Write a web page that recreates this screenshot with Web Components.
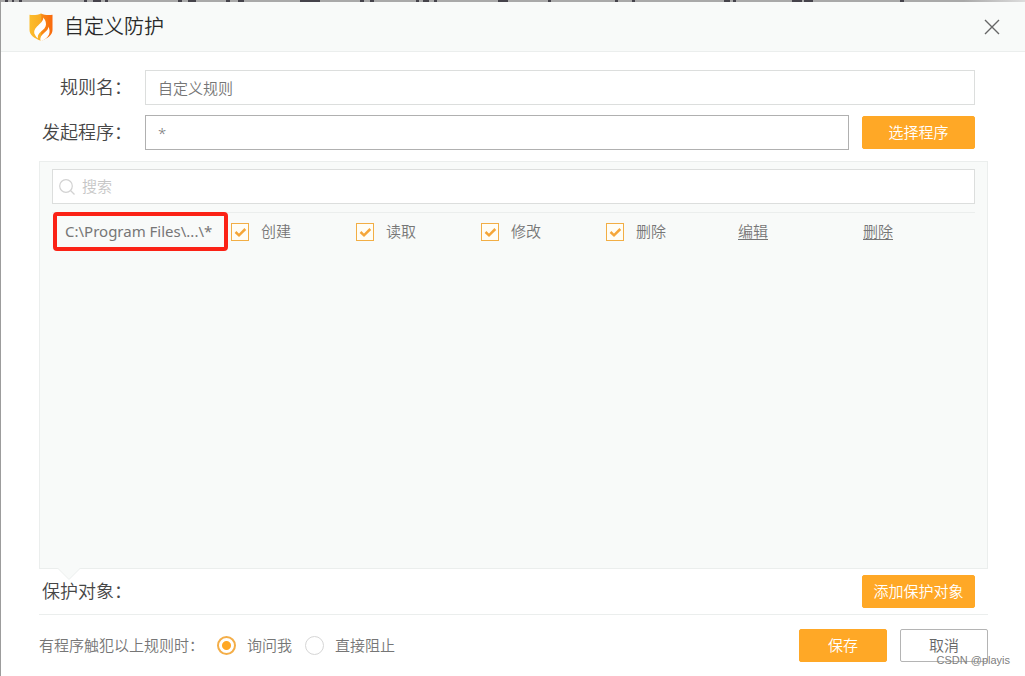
<!DOCTYPE html>
<html lang="zh-CN">
<head>
<meta charset="utf-8">
<title>自定义防护</title>
<style>
  html { height: 100%; }
  body {
    margin: 0;
    min-height: 100%;
    display: flex;
    --ui-font: "Liberation Sans", "Noto Sans CJK SC", sans-serif;
    --accent: #ffa826;
    --soft: #f8faf9;
    --line: #ebeeed;
    --ink: #464646;
    --text: #767676;
    font: 350 15px/20px var(--ui-font);
    color: var(--text);
  }
</style>
</head>
<body>
<rule-dialog heading="自定义防护">
  <text-field label="规则名：" value="自定义规则"></text-field>
  <text-field label="发起程序：" value="*" strong>
    <action-button slot="action">选择程序</action-button>
  </text-field>
  <target-panel slot="panel"></target-panel>
  <section-bar slot="footer" label="保护对象：">
    <action-button>添加保护对象</action-button>
  </section-bar>
  <response-bar slot="footer" label="有程序触犯以上规则时：">
    <action-button size="small">保存</action-button>
    <action-button size="small" variant="plain">取消</action-button>
  </response-bar>
  <span slot="credit">CSDN @playis</span>
</rule-dialog>

<script>
const define = (name, html, setup) => {
  const template = document.createElement('template');
  template.innerHTML = html;
  customElements.define(name, class extends HTMLElement {
    constructor() {
      super();
      this.attachShadow({ mode: 'open' }).append(template.content.cloneNode(true));
    }
    connectedCallback() {
      if (setup) setup(this, this.shadowRoot);
    }
  });
};

define('brand-shield', `
<style>
  :host { display: block; width: 24px; height: 28px; }
  svg { display: block; width: 100%; height: 100%; }
</style>
<svg viewBox="0 0 24 28" aria-hidden="true">
  <defs>
    <linearGradient id="g" x1="0" y1="0" x2="1" y2="0">
      <stop offset="0" stop-color="#fcbd2c"/><stop offset=".5" stop-color="#f9ac24"/>
      <stop offset=".53" stop-color="#f98a16"/><stop offset="1" stop-color="#f9690d"/>
    </linearGradient>
  </defs>
  <path fill="url(#g)" d="M12 .5C9 2 4.5 2.2.5 1.8V17c0 5 5 8.500 11.500 10.800C18.500 25.500 23.500 22 23.500 17V1.800C19.500 2.200 15 2 12 .5z"/>
  <path fill="#fff" d="M14.300 4.500C14.500 8 11 10.500 8 13.500C5 16.500 4.300 19.500 6.200 22.300C7 23.800 8 24.800 9 25.400C8.200 21.500 11 19.500 13.500 17.300C16.500 15 17.500 12 16.800 9.500C16.500 7.500 15.500 6 14.300 4.500z"/>
  <path fill="#fff" d="M19.300 13.500C19.500 16.500 17 18.300 14.800 20.300C12.500 22.300 11 24 11.300 27.500L12.500 28C16 26.500 18.800 24.300 20 21.500C21 18.800 20.700 16 19.300 13.500z"/>
</svg>`);

define('action-button', `
<style>
  :host { display: block; flex: none; }
  button {
    box-sizing: border-box; display: block; width: 113px; height: 33px; padding: 0;
    border: 1px solid var(--accent); border-radius: 2px; background: var(--accent);
    color: #fff; font: 350 15px/20px var(--ui-font);
  }
  :host([size="small"]) button { width: 88px; }
  :host([variant="plain"]) button { background: #fff; border-color: #b4b4b4; color: #666; }
</style>
<button type="button"><slot></slot></button>`);

define('text-field', `
<style>
  :host { display: flex; align-items: center; }
  label {
    flex: none; width: 93px; margin-right: 13px; text-align: right; white-space: nowrap;
    font-size: 18px; color: var(--ink);
  }
  input {
    box-sizing: border-box; flex: 1; min-width: 0; height: 35px; padding: 0 12px;
    border: 1px solid #dcdedd; border-radius: 0; background: #fff; outline: 0;
    color: var(--text); font: 350 15px/20px "Noto Sans", "Noto Sans CJK SC", sans-serif;
  }
  :host([strong]) input { border-color: #b0b0b0; }
  ::slotted(*) { margin-left: 13px; }
</style>
<label for="field"></label><input id="field" type="text"><slot name="action"></slot>`,
(host, root) => {
  root.querySelector('label').textContent = host.getAttribute('label');
  root.querySelector('input').value = host.getAttribute('value');
});

define('search-box', `
<style>
  :host {
    box-sizing: border-box; display: flex; align-items: center; gap: 7px; height: 35px;
    padding: 0 6px; border: 1px solid #dcdedd; background: #fff;
  }
  svg { flex: none; width: 16px; height: 16px; fill: none; stroke: #d2d2d2; stroke-width: 1.2; }
  input {
    flex: 1; min-width: 0; padding: 0; border: 0; outline: 0; background: none;
    color: var(--text); font: 350 15px/20px var(--ui-font);
  }
  input::placeholder { color: #c6c6c6; opacity: 1; }
</style>
<svg viewBox="0 0 16 16" aria-hidden="true"><circle cx="7" cy="7" r="6.300"/><path d="M11.500 11.500L15.500 15.500"/></svg>
<input type="search" placeholder="搜索" aria-label="搜索">`);

define('check-option', `
<style>
  :host { display: block; }
  label { display: grid; grid-template-columns: 18px auto; column-gap: 12px; align-items: center; }
  input {
    grid-area: 1 / 1; appearance: none; box-sizing: border-box; width: 18px; height: 18px;
    margin: 0; border: 1px solid #f2ae45; background: #fffdf5;
  }
  svg { grid-area: 1 / 1; width: 18px; height: 18px; fill: none; stroke: #f5a638; stroke-width: 2.500; pointer-events: none; }
  input:not(:checked) + svg { visibility: hidden; }
</style>
<label><input type="checkbox" checked><svg viewBox="0 0 18 18" aria-hidden="true"><path d="M4.500 9L8 12.300L14.300 6"/></svg><slot></slot></label>`);

define('target-panel', `
<style>
  :host {
    display: block; box-sizing: border-box; position: relative; padding: 7px 12px;
    border: 1px solid var(--line); background: var(--soft);
  }
  .notch { position: absolute; left: 17px; top: 100%; width: 24px; height: 12px; }
  .notch path { fill: var(--soft); stroke: var(--line); }
  table {
    width: 100%; margin-top: 8px; border-collapse: collapse; table-layout: fixed;
    border-top: 1px solid var(--line);
  }
  td { width: 125px; height: 37px; padding: 0; white-space: nowrap; }
  td.path { width: 179px; position: relative; }
  td.path span { padding-left: 13px; font-family: "Noto Sans", sans-serif; font-weight: 400; }
  .mark {
    position: absolute; inset: -1px 3px -1px 1px; border: 4px solid #fb2216; border-radius: 4px;
  }
  td:last-child { width: auto; }
  a { margin-left: 7px; color: inherit; text-underline-offset: 2px; }
</style>
<search-box></search-box>
<table>
  <tbody><tr>
    <td class="path"><span>C:\\Program Files\\...\\*</span><div class="mark"></div></td>
    <td><check-option>创建</check-option></td>
    <td><check-option>读取</check-option></td>
    <td><check-option>修改</check-option></td>
    <td><check-option>删除</check-option></td>
    <td><a href="#edit">编辑</a></td>
    <td><a href="#remove">删除</a></td>
  </tr></tbody>
</table>
<svg class="notch" viewBox="0 0 24 12" aria-hidden="true"><path d="M0 -.5L12 11.500L24 -.5"/></svg>`);

define('section-bar', `
<style>
  :host {
    display: flex; align-items: center; justify-content: space-between;
    padding: 6px 13px 6px 3px; border-bottom: 1px solid var(--line);
  }
  h2 { margin: 0; font-size: 18px; font-weight: 350; color: var(--ink); }
</style>
<h2></h2><slot></slot>`,
(host, root) => { root.querySelector('h2').textContent = host.getAttribute('label'); });

define('response-bar', `
<style>
  :host { display: flex; align-items: center; gap: 13px; padding: 14px 0; }
  fieldset { display: flex; align-items: center; flex: 1; gap: 13px; margin: 0; padding: 0; border: 0; min-width: 0; white-space: nowrap; }
  label { display: flex; align-items: center; gap: 11px; }
  input {
    appearance: none; box-sizing: border-box; width: 19px; height: 19px; margin: 0;
    border: 1px solid #d6d6d6; border-radius: 50%; background: #fff;
  }
  input:checked { border: 2px solid #f4ae48; background: radial-gradient(circle, var(--accent) 4px, #fff 5px); }
</style>
<fieldset aria-labelledby="caption">
  <span id="caption"></span>
  <label><input type="radio" name="response" checked>询问我</label>
  <label><input type="radio" name="response">直接阻止</label>
</fieldset>
<slot></slot>`,
(host, root) => { root.querySelector('#caption').textContent = host.getAttribute('label'); });

define('rule-dialog', `
<style>
  :host {
    flex: 1; min-width: 0; box-sizing: border-box; position: relative; display: flex; flex-direction: column;
    border-left: 1px solid #9c9c9c; background: #fff;
  }
  .edge { flex: none; display: block; width: 100%; height: 2px; background: linear-gradient(to right, #a9a9a9 94%, #ddd); }
  header {
    display: flex; align-items: center; height: 49px; padding: 0 25px 0 28px;
    border-bottom: 1px solid var(--line); background: var(--soft);
  }
  h1 { flex: 1; margin: 0 0 0 11px; font-size: 20px; line-height: 28px; font-weight: 350; color: #2a2a2a; }
  header button { width: 16px; height: 16px; padding: 0; border: 0; background: none; }
  header button svg { display: block; width: 16px; height: 16px; stroke: #666; stroke-width: 1.400; }
  form { flex: 1; display: flex; flex-direction: column; padding: 18px 37px 0 38px; }
  .fields { display: flex; flex-direction: column; gap: 10px; padding-right: 13px; margin-bottom: 11px; }
  ::slotted([slot="panel"]) { flex: 1; min-height: 200px; }
  ::slotted([slot="credit"]) {
    position: absolute; right: 15px; bottom: 8px;
    font: 11px/16px "Liberation Sans", sans-serif; color: #808080;
  }
</style>
<svg class="edge" viewBox="0 0 1024 2" preserveAspectRatio="none" aria-hidden="true">
  <path stroke="#45434b" stroke-width="2" d="M4 1h3m4 0h2m5 0h3m62 0h3m6 0h8m4 0h3m70 0h4m6 0h8m30 0h4m8 0h6m56 0h20m40 0h4m6 0h4m42 0h3m4 0h6m5 0h3m61 0h10m40 0h3m64 0h3m14 0h3m89 0h6m3 0h3m56 0h10m2 0h9m87 0h4"/>
</svg>
<header>
  <brand-shield></brand-shield>
  <h1></h1>
  <button type="button" aria-label="关闭"><svg viewBox="0 0 16 16" aria-hidden="true"><path d="M1 1L15 15M15 1L1 15"/></svg></button>
</header>
<form>
  <div class="fields"><slot></slot></div>
  <slot name="panel"></slot>
  <slot name="footer"></slot>
</form>
<slot name="credit"></slot>`,
(host, root) => { root.querySelector('h1').textContent = host.getAttribute('heading'); });
</script>
</body>
</html>
